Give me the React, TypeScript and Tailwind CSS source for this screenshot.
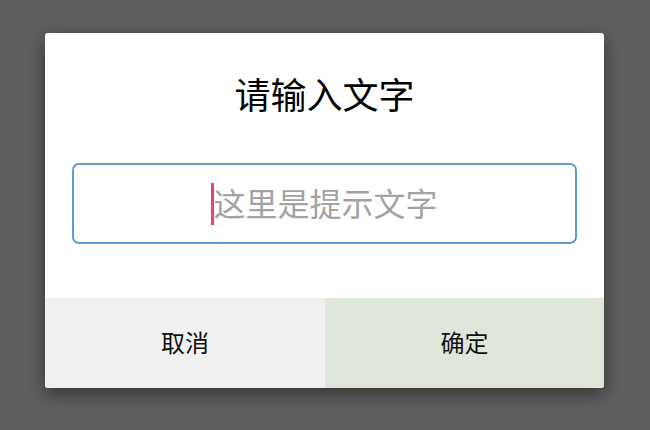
import React from "react";

function InputDialog() {
  return (
    <div className="w-[559px] h-[355px] bg-white rounded-[3px] overflow-hidden flex flex-col shadow-[0_6px_18px_rgba(0,0,0,0.45)]">
      <h2 className="pt-[41px] text-center text-[36px] leading-[44px] text-black">
        请输入文字
      </h2>
      <div className="mx-[27px] mt-[45px] h-[81px] border-2 border-[#5e9cd4] rounded-[7px] flex items-center justify-center">
        <span className="w-[3px] h-[42px] bg-[#f23d7c] mr-[-1px]" />
        <span className="text-[32px] leading-[40px] text-[#a3a3a3]">这里是提示文字</span>
      </div>
      <div className="mt-auto flex h-[90px]">
        <button className="w-[280px] bg-[#f0f0f0] text-[24px] text-[#111]">取消</button>
        <button className="flex-1 bg-[#dfe7da] text-[24px] text-[#111]">确定</button>
      </div>
    </div>
  );
}

export default function App() {
  return (
    <div
      className="w-[650px] h-[430px] bg-[#5f5f5f] pl-[45px] pt-[33px]"
      style={{ fontFamily: '"Noto Sans", "Noto Sans CJK SC", sans-serif' }}
    >
      <InputDialog />
    </div>
  );
}
